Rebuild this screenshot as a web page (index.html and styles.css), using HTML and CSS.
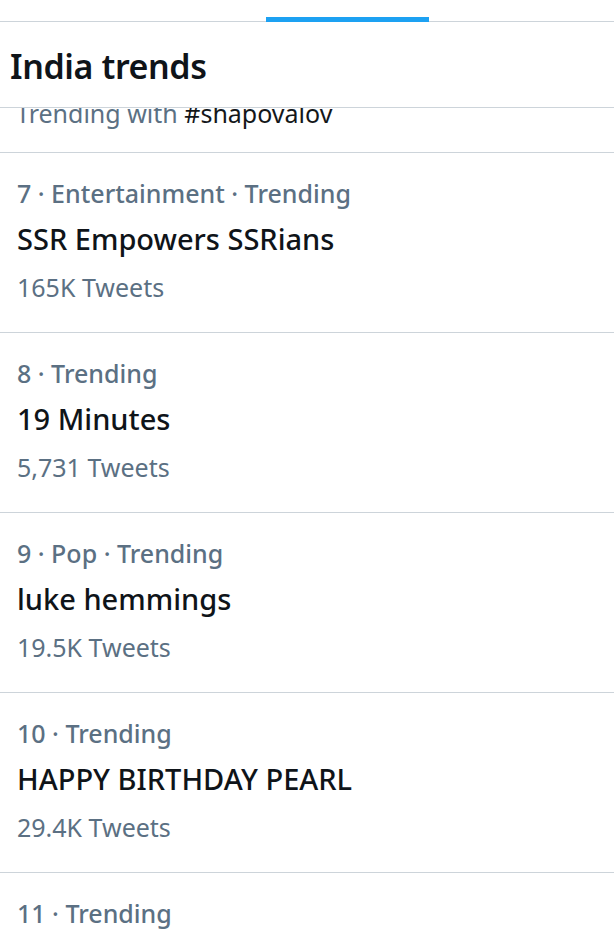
FILE: index.html
```html
<!DOCTYPE html>
<html lang="en">
<head>
<meta charset="utf-8">
<title>India trends</title>
<link rel="stylesheet" href="styles.css">
</head>
<body>
<div class="page">
  <div class="tabbar">
    <div class="tab"></div>
    <div class="tab active"></div>
    <div class="tab"></div>
  </div>
  <header class="header">
    <h1 class="title">India trends</h1>
  </header>
  <div class="partial">
    <div class="partial-text"><span class="muted">Trending with</span> #shapovalov</div>
  </div>
  <ul class="trends">
    <li class="trend">
      <div class="meta">7 · Entertainment · Trending</div>
      <div class="name">SSR Empowers SSRians</div>
      <div class="count">165K Tweets</div>
    </li>
    <li class="trend">
      <div class="meta">8 · Trending</div>
      <div class="name">19 Minutes</div>
      <div class="count">5,731 Tweets</div>
    </li>
    <li class="trend">
      <div class="meta">9 · Pop · Trending</div>
      <div class="name">luke hemmings</div>
      <div class="count">19.5K Tweets</div>
    </li>
    <li class="trend">
      <div class="meta">10 · Trending</div>
      <div class="name">HAPPY BIRTHDAY PEARL</div>
      <div class="count">29.4K Tweets</div>
    </li>
    <li class="trend">
      <div class="meta">11 · Trending</div>
      <div class="name">&nbsp;</div>
      <div class="count">&nbsp;</div>
    </li>
  </ul>
</div>
</body>
</html>
```

FILE: styles.css
```css
* { box-sizing: border-box; }
html, body {
  margin: 0;
  padding: 0;
  background: #ffffff;
}
body {
  font-family: "Noto Sans", "Open Sans", sans-serif;
  color: #14171a;
  overflow: hidden;
}
.page {
  width: 614px;
  height: 946px;
  overflow: hidden;
}
.tabbar {
  display: grid;
  grid-template-columns: 266px 163px 1fr;
  height: 22px;
  border-bottom: 1px solid #cdd4da;
}
.tab.active {
  align-self: end;
  height: 5px;
  margin-bottom: -1px;
  background: #1da1f2;
}
.header {
  height: 86px;
  display: flex;
  align-items: center;
  padding: 2px 0 0 10px;
  border-bottom: 1px solid #cdd4da;
}
.title {
  margin: 0;
  font-size: 34px;
  font-weight: 600;
  letter-spacing: -0.4px;
  color: #0f1419;
}
.partial {
  height: 45px;
  overflow: hidden;
  border-bottom: 1px solid #cdd4da;
  position: relative;
}
.partial-text {
  position: absolute;
  left: 16px;
  top: -18px;
  font-size: 25px;
  line-height: 47px;
  color: #14171a;
}
.muted { color: #5b7083; }
.trends {
  list-style: none;
  margin: 0;
  padding: 0;
}
.trend {
  padding: 17px 17px 21px;
  border-bottom: 1px solid #cdd4da;
  font-size: 25px;
  line-height: 47px;
}
.meta {
  color: #5b7083;
  font-weight: 500;
}
.name {
  color: #0f1419;
  font-weight: 500;
  font-size: 29px;
  margin-top: -2px;
  margin-bottom: 2px;
}
.count {
  color: #5b7083;
}
```
